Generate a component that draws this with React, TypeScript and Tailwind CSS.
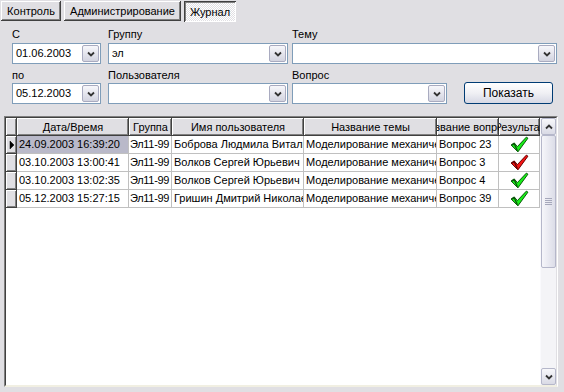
import React from "react";

const raised =
  "shadow-[inset_-1px_-1px_0_#404040,inset_1px_1px_0_#ffffff,inset_-2px_-2px_0_#808080]";
const sunken =
  "shadow-[inset_1px_1px_0_#404040,inset_-1px_-1px_0_#ffffff,inset_2px_2px_0_#808080]";

const rows = [
  { date: "24.09.2003 16:39:20", group: "Эл11-99", user: "Боброва Людмила Витальевна", theme: "Моделирование механических систем", q: "Вопрос 23", ok: true },
  { date: "03.10.2003 13:00:41", group: "Эл11-99", user: "Волков Сергей Юрьевич Г", theme: "Моделирование механических систем", q: "Вопрос 3", ok: false },
  { date: "03.10.2003 13:02:35", group: "Эл11-99", user: "Волков Сергей Юрьевич Г", theme: "Моделирование механических систем", q: "Вопрос 4", ok: true },
  { date: "05.12.2003 15:27:15", group: "Эл11-99", user: "Гришин Дмитрий Николаевич", theme: "Моделирование механических систем", q: "Вопрос 39", ok: true },
];

const cols = [
  { title: "Дата/Время", w: "w-[112px]", pad: "pl-[2px]" },
  { title: "Группа", w: "w-[43px]", pad: "pl-[1px] tracking-[-0.3px]" },
  { title: "Имя пользователя", w: "w-[132px]", pad: "pl-[2px]" },
  { title: "Название темы", w: "w-[133px]", pad: "pl-[2px]" },
  { title: "Название вопроса", w: "w-[62px]", pad: "pl-[2px]" },
  { title: "Результат", w: "w-[41px]", pad: "" },
];

function Chevron({ up = false }: { up?: boolean }) {
  return (
    <svg width="8" height="6" viewBox="0 0 8 6" className={up ? "rotate-180" : ""}>
      <path d="M1 1.5 L4 4.5 L7 1.5" fill="none" stroke="#333" strokeWidth="1.8" />
    </svg>
  );
}

function DropBtn() {
  return (
    <div className="w-[17px] h-[17px] mt-[1px] mr-[1px] flex items-center justify-center rounded-[2px] border border-[#a9abc0] bg-gradient-to-b from-[#f7f7fb] to-[#d3d4e0]">
      <Chevron />
    </div>
  );
}

function Combo({ w, value = "" }: { w: string; value?: string }) {
  return (
    <div className={`${w} h-[21px] flex border border-[#7f9db9] bg-white`}>
      <div className="flex-1 pl-[3px] leading-[19px] overflow-hidden whitespace-nowrap">{value}</div>
      <DropBtn />
    </div>
  );
}

function Check({ ok }: { ok: boolean }) {
  const fill = ok ? "#19ee19" : "#f51414";
  const dark = ok ? "#0a520a" : "#600000";
  return (
    <svg width="19" height="17" viewBox="0 0 18 16">
      <path d="M1 8.5 L4 6.5 L7 10 L15.5 1 L17 2 L7.5 15 Z" fill={fill} stroke={dark} strokeWidth="0.9" strokeLinejoin="round" />
      <path d="M1.6 8.6 L4 7.2 L7 14" fill="none" stroke={dark} strokeWidth="1.2" />
    </svg>
  );
}

export default function App() {
  return (
    <div className="w-[564px] h-[392px] overflow-hidden bg-[#e0dfe3] text-[11px] text-black font-['Liberation_Sans',Arial,sans-serif]">
      {/* tabs */}
      <div className="flex gap-[3px] pl-[1px] pt-[1px] h-[22px]">
        <div className={`w-[60px] h-[20px] flex items-center justify-center ${raised}`}>Контроль</div>
        <div className={`w-[117px] h-[20px] flex items-center justify-center ${raised}`}>Администрирование</div>
        <div
          className={`w-[52px] h-[21px] flex items-center justify-center pt-[1px] bg-[image:repeating-conic-gradient(#ffffff_0_25%,#e0dfe3_0_50%)] bg-[length:2px_2px] ${sunken}`}
        >
          Журнал
        </div>
      </div>

      {/* filters */}
      <div className="pt-[4px] pl-[12px] flex">
        <div className="w-[89px]">
          <div className="h-[17px] leading-[14px] pt-[1px]">С</div>
          <Combo w="w-[89px]" value="01.06.2003" />
          <div className="h-[19px] leading-[14px] pt-[4px]">по</div>
          <Combo w="w-[89px]" value="05.12.2003" />
        </div>
        <div className="w-[180px] ml-[7px]">
          <div className="h-[17px] leading-[14px] pt-[1px]">Группу</div>
          <Combo w="w-[180px]" value="эл" />
          <div className="h-[19px] leading-[14px] pt-[4px]">Пользователя</div>
          <Combo w="w-[180px]" />
        </div>
        <div className="w-[265px] ml-[4px]">
          <div className="h-[17px] leading-[14px] pt-[1px]">Тему</div>
          <Combo w="w-[265px]" />
          <div className="flex">
            <div>
              <div className="h-[19px] leading-[14px] pt-[4px]">Вопрос</div>
              <Combo w="w-[155px]" />
            </div>
            <div className="ml-[17px] mt-[18px] w-[89px] h-[22px] rounded-[3px] border border-[#003c74] bg-gradient-to-b from-[#ffffff] via-[#f0f0f4] to-[#d6d8e4] flex items-center justify-center text-[12px]">
              Показать
            </div>
          </div>
        </div>
      </div>

      {/* grid */}
      <div className="ml-[4px] mt-[12px] w-[554px] h-[271px] border border-t-[#808080] border-l-[#808080] border-r-[#ffffff] border-b-[#f1efe2]">
        <div className="w-full h-full flex border border-t-[#404040] border-l-[#404040] border-r-[#e0dfe3] border-b-[#f1efe2] bg-white">
          <div className="flex-1 overflow-hidden">
            <div className="flex h-[18px]">
              <div className={`w-[11px] shrink-0 bg-[#e0dfe3] ${raised}`} />
              {cols.map((c) => (
                <div
                  key={c.title}
                  className={`${c.w} shrink-0 bg-[#e0dfe3] ${raised} flex justify-center items-center overflow-hidden whitespace-nowrap`}
                >
                  <span className="shrink-0">{c.title}</span>
                </div>
              ))}
            </div>
            {rows.map((r, i) => (
              <div key={i} className="flex h-[18px]">
                <div className={`w-[11px] shrink-0 bg-[#e0dfe3] ${raised} flex items-center justify-center`}>
                  {i === 0 && (
                    <svg width="6" height="10" viewBox="0 0 6 10">
                      <path d="M1 1 L5 5 L1 9 Z" fill="#000" stroke="#000" strokeWidth="0.5" />
                    </svg>
                  )}
                </div>
                {[r.date, r.group, r.user, r.theme, r.q].map((v, j) => (
                  <div
                    key={j}
                    className={`${cols[j].w} ${cols[j].pad} shrink-0 border-r border-b border-[#c0c0c0] leading-[17px] overflow-hidden whitespace-nowrap ${
                      i === 0 && j === 0 ? "bg-[#b9b9c9]" : ""
                    }`}
                  >
                    {v}
                  </div>
                ))}
                <div className="w-[41px] shrink-0 border-r border-b border-[#c0c0c0] flex items-center justify-center">
                  <Check ok={r.ok} />
                </div>
              </div>
            ))}
          </div>

          {/* scrollbar */}
          <div className="w-[16px] shrink-0 flex flex-col bg-[#f4f4f7] border-l border-[#fafafd]">
            <div className="h-[17px] rounded-[2px] border border-[#b5b7ca] bg-gradient-to-b from-[#f8f8fb] to-[#d9dae5] flex items-center justify-center">
              <Chevron up />
            </div>
            <div className="h-[133px] rounded-[2px] border border-[#b5b7ca] bg-gradient-to-r from-[#f6f6fa] to-[#dcdde8] flex flex-col items-center justify-center gap-[1px]">
              <div className="w-[7px] h-[1px] bg-[#a6a8bb]" />
              <div className="w-[7px] h-[1px] bg-[#a6a8bb]" />
              <div className="w-[7px] h-[1px] bg-[#a6a8bb]" />
              <div className="w-[7px] h-[1px] bg-[#a6a8bb]" />
            </div>
            <div className="flex-1" />
            <div className="h-[17px] rounded-[2px] border border-[#b5b7ca] bg-gradient-to-b from-[#f8f8fb] to-[#d9dae5] flex items-center justify-center">
              <Chevron />
            </div>
          </div>
        </div>
      </div>
    </div>
  );
}
